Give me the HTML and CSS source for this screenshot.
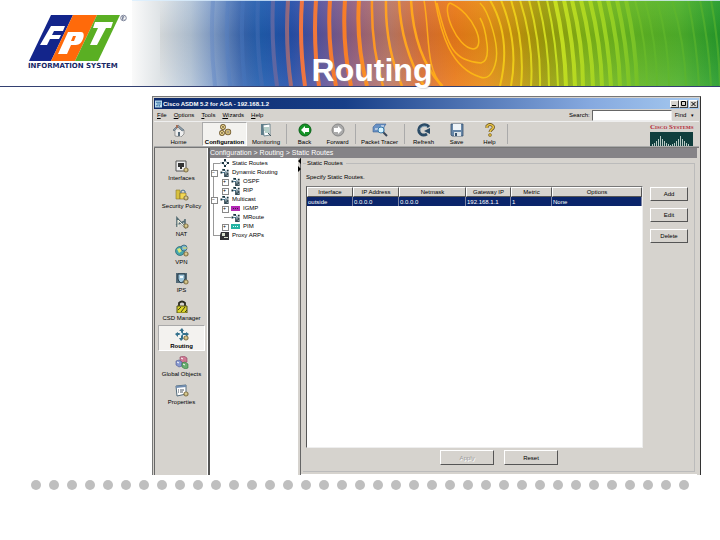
FILE: index.html
```
<!DOCTYPE html>
<html lang="en">
<head>
<meta charset="utf-8">
<title>Routing</title>
<link rel="stylesheet" href="styles.css">
</head>
<body>
<svg class="defs" aria-hidden="true">
  <symbol id="gear" viewBox="0 0 6 6"><circle cx="3" cy="3" r="2" fill="#f0e2a0" stroke="#85754a" stroke-width="1.2"/><circle cx="3" cy="3" r=".6" fill="#75683d"/></symbol>
  <symbol id="nodes" viewBox="0 0 10 8"><path d="M0 4h2M5 2l3 2-3 3-2-3z" stroke="#456274" fill="none" stroke-width=".7"/><path d="M4 0h2v2H4zM2 3h2v2H2zM7 3h2v2H7zM4 6h2v2H4z" fill="#18323e"/></symbol>
  <symbol id="routes" viewBox="0 0 10 10"><path d="M3 1l4 4M2 5h3" stroke="#397599"/><path d="M2 1h3v2H2zM0 4h2v2H0zM7 2h2v2H7z" fill="#17333e"/><path d="M4 5h5v5H4z" fill="#384d57"/><path d="M5 6h2v1H5zM7 8h1v1H7z" fill="#c8e4ee"/></symbol>
</svg>
<main class="slide">
  <header class="banner">
    <div class="brand">
      <svg class="logo" viewBox="0 0 100 48" role="img" aria-label="FPT">
        <path d="M23 2h22L23 48H1z" fill="#13258b"/><path d="M45 2h24L47 48H23z" fill="#ff6a0a"/><path d="M69 2h23L70 48H47z" fill="#5aaf23"/>
        <path d="M23 13h14l-2 5h-9l-2 4h9l-2 4h-9l-3 6h-7z M40 19h13c4 0 3 6 1 9-2 4-5 4-9 4h-2l-4 9h-9z M67 9h18l-2 6h-5L69 32h-7l8-17h-5z" fill="#fff"/><path d="M45 23h3l-2 5h-3z" fill="#ff6a0a"/>
        <circle cx="95.500" cy="5" r="2.800" fill="none" stroke="#4b5573" stroke-width=".7"/><path d="M94.500 7V3.500h1.500q1 1-1.500 1.500l2 2" fill="none" stroke="#4b5573" stroke-width=".6"/>
      </svg>
      <p class="brand-name">INFORMATION SYSTEM</p>
    </div>
    <svg class="waves" viewBox="132 0 588 86" preserveAspectRatio="none" aria-hidden="true">
      <defs>
        <linearGradient id="base" gradientUnits="userSpaceOnUse" x1="132" y1="0" x2="720" y2="0">
          <stop offset="0" stop-color="#fafafa"/><stop offset=".05" stop-color="#dde2e5"/><stop offset=".1" stop-color="#b4c5d8"/><stop offset=".14" stop-color="#7f9dca"/><stop offset=".185" stop-color="#3c68b0"/><stop offset=".22" stop-color="#205daf"/><stop offset=".27" stop-color="#2450ab"/><stop offset=".32" stop-color="#5a559f"/><stop offset=".38" stop-color="#98627e"/><stop offset=".44" stop-color="#bd7965"/><stop offset=".49" stop-color="#db7135"/><stop offset=".55" stop-color="#eb7b19"/><stop offset=".6" stop-color="#e78c15"/><stop offset=".65" stop-color="#c9960d"/><stop offset=".7" stop-color="#9f9d0a"/><stop offset=".77" stop-color="#80b516"/><stop offset=".85" stop-color="#62b622"/><stop offset=".93" stop-color="#50b22b"/><stop offset="1" stop-color="#259b2c"/>
        </linearGradient>
        <linearGradient id="ridge" gradientUnits="userSpaceOnUse" x1="200" y1="0" x2="720" y2="0">
          <stop offset="0" stop-color="#6c8dc8"/><stop offset=".1" stop-color="#3f72bc"/><stop offset=".15" stop-color="#72679b"/><stop offset=".19" stop-color="#ee7443"/><stop offset=".28" stop-color="#f77d28"/><stop offset=".36" stop-color="#ffa222"/><stop offset=".5" stop-color="#ffae14"/><stop offset=".6" stop-color="#eecb18"/><stop offset=".68" stop-color="#c9de20"/><stop offset=".78" stop-color="#9bd222"/><stop offset=".87" stop-color="#64b92a"/><stop offset="1" stop-color="#55b22d"/>
        </linearGradient>
        <linearGradient id="shade" x2="0" y2="1"><stop stop-color="#fff" stop-opacity=".05"/><stop offset=".4" stop-color="#000" stop-opacity=".06"/><stop offset="1" stop-color="#fff" stop-opacity=".08"/></linearGradient>
      </defs>
      <path fill="url(#base)" d="M132 0h588v86H132z"/><path fill="url(#shade)" d="M160 0h560v86H160z"/>
      <g fill="none" stroke="url(#ridge)">
        <path stroke-width="4" opacity=".45" d="M213 0q-3 43 2 86M228 0q-3 43 2 86M243 0q-3 43 2 86M258 0q-2 43 4 86"/>
        <path stroke-width="4" opacity=".8" d="M273 0q-2 43 4 86M288 0q-3 43 3 86"/>
        <path stroke-width="4" d="M302 0q-3 43 3 86M316 0q-3 43 3 86M330 0q-3 43 6 86M345 0q-3 43 6 86M359 0q-3 43 8 86"/>
        <path stroke-width="2.500" d="M372 0q-1 46 11 86M386 0q-1 46 16 86M399 0q2 48 25 86M411 0q3 56 31 86"/>
        <path stroke-width="1.500" d="M424 0C430 34 425 70 443 86M435 0C441 34 451 68 480 77Q490 81 495 65C501 47 488 10 480 3M450 3C441 8 457 48 473 49C487 48 474 13 450 3M437 3C448 50 454 60 481 63Q489 61 487 44Q485 26 480 18"/>
        <path stroke-width="2" d="M490 0Q512 38 500 86M501 0Q519 44 511 86M511 0Q525 44 521 86M520 0Q534 44 531 86M529 0q12 44 11 86M538 0q11 44 11 86M547 0q10 44 11 86"/>
        <path stroke-width="4" d="M555 0q10 44 11 86M564 0q10 44 11 86M572 0q11 44 11 86M581 0q11 44 12 86M590 0q11 44 12 86M599 0q10 44 12 86M608 0q11 44 12 86M617 0q10 44 12 86M626 0q10 44 11 86"/>
        <path stroke-width="2" opacity=".65" d="M635 0q12 44 12 86M645 0q12 44 12 86M657 0q12 44 12 86M672 0q13 44 14 86M688 0q9 44 11 86M700 0q9 44 11 86M711 0q8 44 9 86"/>
      </g>
      <path fill="#d9efff" fill-opacity=".8" d="M132 0h588v1H132z"/>
    </svg>
    <h1 class="title">Routing</h1>
  </header>

  <section class="window" aria-label="Cisco ASDM">
    <div class="titlebar">
      <svg class="app-icon" viewBox="0 0 8 8"><path fill="#bfe0f0" d="M0 0h8v8H0z"/><path d="M1 2h6M2 4h5M1 6h3M5 5v2" stroke="#276299"/></svg>
      <span class="caption">Cisco ASDM 5.2 for ASA - 192.168.1.2</span>
      <button class="win-btn" aria-label="Minimize"><svg viewBox="0 0 7 6"><path d="M1 4.500h4" stroke="#000"/></svg></button>
      <button class="win-btn" aria-label="Maximize"><svg viewBox="0 0 7 6"><path d="M1.500 .5h4v4h-4z" fill="none" stroke="#000"/></svg></button>
      <button class="win-btn close" aria-label="Close"><svg viewBox="0 0 7 6"><path d="M1.500 1l4 4M5.500 1l-4 4" stroke="#000"/></svg></button>
    </div>
    <nav class="menubar">
      <button><u>F</u>ile</button><button><u>O</u>ptions</button><button><u>T</u>ools</button><button><u>W</u>izards</button><button><u>H</u>elp</button>
      <label class="search" for="search">Search:</label><input id="search" type="text">
      <button class="find">Find <span class="caret">▾</span></button>
    </nav>
    <div class="toolbar">
      <button class="tool home"><svg viewBox="0 0 14 14"><path d="M3 7v6l6 1 3-3V7" fill="#eee" stroke="#777" stroke-width=".7"/><path d="M1 7l5-5 6 5-2 1-4-4-4 4z" fill="#8d9da9" stroke="#50606b" stroke-width=".6"/><path d="M6 9h2v4H6z" fill="#566a79"/><path d="M4 2h2v3H4z" fill="#a46f58"/></svg>Home</button>
      <button class="tool wide active"><svg viewBox="0 0 14 14"><g fill="none" stroke="#786032" stroke-width="2.400"><circle cx="5" cy="3" r="1.700"/><circle cx="10" cy="8" r="2"/><circle cx="4" cy="9" r="1.700"/></g><g fill="none" stroke="#e9d58c"><circle cx="5" cy="3" r="1.600"/><circle cx="10" cy="8" r="1.900"/><circle cx="4" cy="9" r="1.600"/></g></svg>Configuration</button>
      <button class="tool mid"><svg viewBox="0 0 14 14"><path d="M2 1h6v11H2z" fill="#5f7f8c"/><path d="M4 2l7-1v11l-6 1z" fill="#fff" stroke="#567380" stroke-width=".8"/><path d="M5 5h5M5 7h5M6 9h4" stroke="#6d9f92"/><path d="M9 10l3 3" stroke="#44565e"/></svg>Monitoring</button>
      <span class="sep"></span>
      <button class="tool"><svg viewBox="0 0 14 14"><circle cx="7" cy="7" r="6" fill="#149326" stroke="#096218"/><path d="M3 7l4-4v2h4v4H7v2z" fill="#fff"/></svg>Back</button>
      <button class="tool"><svg viewBox="0 0 14 14"><circle cx="7" cy="7" r="6" fill="#aaa" stroke="#878787"/><path d="M11 7L7 3v2H3v4h4v2z" fill="#fff"/></svg>Forward</button>
      <span class="sep"></span>
      <button class="tool wide"><svg class="broad" viewBox="0 0 16 14"><path d="M1 4l3-3h10l-2 3v5H1z" fill="#6991c4" stroke="#3e6396" stroke-width=".6"/><path d="M3 6h5M9 3h3" stroke="#fff"/><path d="M11 9l4 4" stroke="#39475a" stroke-width="2"/><circle cx="9" cy="7" r="3" fill="#d8f4ff" stroke="#397bab"/></svg>Packet Tracer</button>
      <span class="sep apart"></span>
      <button class="tool"><svg viewBox="0 0 14 14"><path d="M10 11C5 14 1 10 2 6c1-4 7-6 10-2" fill="none" stroke="#2b4b66" stroke-width="3"/><path d="M13 5v6L7 8z" fill="#2b4b66"/><path d="M3 7c0-3 4-5 7-3" fill="none" stroke="#8fb0c5"/></svg>Refresh</button>
      <button class="tool"><svg viewBox="0 0 14 14"><path d="M1 1h12v12H2l-1-1z" fill="#6787a8" stroke="#38526e" stroke-width=".8"/><path d="M3 1h8v6H3z" fill="#eef3f7"/><path d="M4 9h7v4H4z" fill="#dce3e8"/><path d="M5 10h2v3H5z" fill="#38526e"/></svg>Save</button>
      <button class="tool"><svg viewBox="0 0 14 14"><path d="M4 5V3q3-3 6 0c2 3-3 3-3 6" fill="none" stroke="#6c5726" stroke-width="3"/><path d="M4 5V3q3-3 6 0c2 3-3 3-3 6" fill="none" stroke="#e9c548" stroke-width="1.500"/><circle cx="7" cy="12" r="1.500" fill="#e0b938" stroke="#6c5726" stroke-width=".6"/></svg>Help</button>
      <span class="sep"></span>
      <div class="cisco">
        <span class="cisco-name">C<small>ISCO</small> S<small>YSTEMS</small></span>
        <svg viewBox="0 0 43 14" aria-hidden="true"><path fill="#103e3d" d="M0 0h43v14H0z"/><path d="M2.500 14v-2M4.500 14v-3M6.500 14v-5M8.500 14V7M10.500 14V4M12.500 14V7M14.500 14V9M16.500 14v-3M18.500 14v-2M20.500 14v-1M22.500 14v-2M24.500 14v-3M26.500 14V9M28.500 14V7M30.500 14V4M32.500 14V7M34.500 14V9M36.500 14v-3M38.500 14v-2" stroke="#b8cbc6"/></svg>
      </div>
    </div>

    <div class="workspace">
      <nav class="sidebar">
        <button class="side"><svg viewBox="0 0 14 13"><path d="M1 1h10v10H1z" fill="#eee" stroke="#555"/><path d="M3 3h6v4H7v2H5V7H3z" fill="#333"/><use href="#gear" x="8" y="7" width="6" height="6"/></svg>Interfaces</button>
        <button class="side"><svg viewBox="0 0 14 13"><path d="M1 2h4v9H1z" fill="#d8c13f" stroke="#87772c" stroke-width=".6"/><path d="M5 5h6v6H5z" fill="#f1d753" stroke="#785f23" stroke-width=".6"/><path d="M6 5V3q2-2 4 0v2" fill="none" stroke="#476e8f"/><use href="#gear" x="8" y="7" width="6" height="6"/></svg>Security Policy</button>
        <button class="side"><svg viewBox="0 0 14 13"><path d="M2 11V2l8 9V3M1 9l9-4" fill="none" stroke="#536b72" stroke-width="1.600"/><path d="M3 11V4l6 6" fill="none" stroke="#f2f2df"/><use href="#gear" x="8" y="7" width="6" height="6"/></svg>NAT</button>
        <button class="side"><svg viewBox="0 0 14 13"><circle cx="5" cy="7" r="4.500" fill="#46a4ad" stroke="#28646f" stroke-width=".7"/><path d="M2 5l3-1 2 3-3 2z" fill="#d8e979"/><circle cx="9" cy="4" r="3" fill="#78b8cc" stroke="#28546f" stroke-width=".7"/><path d="M8 4h4" stroke="#f5df5c"/><use href="#gear" x="8" y="7" width="6" height="6"/></svg>VPN</button>
        <button class="side"><svg viewBox="0 0 14 13"><path d="M1 1h11v10H1z" fill="#526977"/><path d="M3 2h7v5q-1 3-4 4-3-2-3-4z" fill="#9fc7dc" stroke="#243b49"/><path d="M5 4h3v2H5z" fill="#effaff"/><use href="#gear" x="8" y="7" width="6" height="6"/></svg>IPS</button>
        <button class="side"><svg viewBox="0 0 14 13"><path d="M4 6V3q3-3 6 0v3" fill="none" stroke="#2a2a20" stroke-width="1.800"/><path d="M2 6h10v7H2z" fill="#d9d329" stroke="#55521b"/><path d="M3 10l3-3M6 12l4-5M10 12l2-2" stroke="#403f18"/></svg>CSD Manager</button>
        <button class="side active"><svg viewBox="0 0 14 13"><path d="M7 0l2 3H8v2h3V4l3 2-3 3V7H8v3h1l-3 3-2-3h2V7H3v2L0 6l3-2v1h3V3H4z" fill="#34718c"/><circle cx="6" cy="6" r="1.500" fill="#d4edf5"/><use href="#gear" x="8" y="7" width="6" height="6"/></svg>Routing</button>
        <button class="side"><svg viewBox="0 0 14 13"><path d="M5 1l4-1 3 2v4L8 7 5 5z" fill="#ce7893" stroke="#8c4360" stroke-width=".6"/><path d="M1 5l3-1 3 2v4l-3 1-3-2z" fill="#8798ce" stroke="#4d5590" stroke-width=".6"/><path d="M7 7l3-1 3 2v4l-3 1-3-2z" fill="#69ae70" stroke="#307c40" stroke-width=".6"/><path d="M6 2l2 1M2 6l2 1M8 8l2 1" stroke="#fff"/></svg>Global Objects</button>
        <button class="side"><svg viewBox="0 0 14 13"><path d="M1 2l10-1v9L2 12z" fill="#fff" stroke="#526a7b"/><path d="M1 2l10-1v2L1 4z" fill="#718db0"/><path d="M3 6h1M5 6h4M3 8h1M5 8h3" stroke="#4b5560"/><use href="#gear" x="8" y="7" width="6" height="6"/></svg>Properties</button>
      </nav>
      <div class="pane">
        <h2 class="crumb">Configuration &gt; Routing &gt; Static Routes</h2>
        <div class="split">
          <ul class="tree">
            <li><svg><use href="#nodes" width="10" height="8"/></svg>Static Routes</li>
            <li class="open"><svg><use href="#routes" width="10" height="9"/></svg>Dynamic Routing
              <ul>
                <li class="shut"><svg><use href="#routes" width="10" height="9"/></svg>OSPF</li>
                <li class="shut"><svg><use href="#routes" width="10" height="9"/></svg>RIP</li>
              </ul>
            </li>
            <li class="open"><svg><use href="#routes" width="10" height="9"/></svg>Multicast
              <ul>
                <li class="shut"><svg viewBox="0 0 10 9"><path fill="#b427b5" d="M0 2h9v5H0z"/><path stroke="#401c49" d="M2 4.500h1M4 4.500h1M6 4.500h1"/></svg>IGMP</li>
                <li><svg><use href="#routes" width="10" height="9"/></svg>MRoute</li>
                <li class="shut"><svg viewBox="0 0 10 9"><path fill="#23b3a4" d="M0 2h9v5H0z"/><path stroke="#d9fff8" d="M2 4.500h1M4 4.500h1M6 4.500h1"/></svg>PIM</li>
              </ul>
            </li>
            <li><svg viewBox="0 0 10 9"><path fill="#333" d="M1 1h8v8H0V4z"/><path fill="#d8e0cb" d="M2 2h3v3H2zM4 6h4v1H4z"/></svg>Proxy ARPs</li>
          </ul>
          <div class="divider"><svg viewBox="0 0 3 14"><path d="M3 0v6L0 3zM0 8l3 3-3 3z"/></svg></div>
          <div class="panel">
            <fieldset>
              <legend>Static Routes</legend>
              <p class="hint">Specify Static Routes.</p>
              <div class="editor">
                <div class="grid">
                  <table>
                    <colgroup><col class="c-if"><col class="c-ip"><col class="c-mask"><col class="c-gw"><col class="c-metric"><col></colgroup>
                    <thead><tr><th>Interface</th><th>IP Address</th><th>Netmask</th><th>Gateway IP</th><th>Metric</th><th>Options</th></tr></thead>
                    <tbody><tr><td>outside</td><td>0.0.0.0</td><td>0.0.0.0</td><td>192.168.1.1</td><td>1</td><td>None</td></tr></tbody>
                  </table>
                </div>
                <div class="actions"><button class="btn">Add</button><button class="btn">Edit</button><button class="btn">Delete</button></div>
              </div>
              <div class="footer"><button class="btn large" disabled>Apply</button><button class="btn large">Reset</button></div>
            </fieldset>
          </div>
        </div>
      </div>
    </div>
  </section>

  <div class="dots" aria-hidden="true"><i></i><i></i><i></i><i></i><i></i><i></i><i></i><i></i><i></i><i></i><i></i><i></i><i></i><i></i><i></i><i></i><i></i><i></i><i></i><i></i><i></i><i></i><i></i><i></i><i></i><i></i><i></i><i></i><i></i><i></i><i></i><i></i><i></i><i></i><i></i><i></i><i></i></div>
</main>
</body>
</html>
```
FILE: styles.css
```
* { box-sizing: border-box; }
body { margin: 0; background: #fff; font: 6px/8px "Liberation Sans", Arial, sans-serif; color: #000; }
button { font: inherit; color: inherit; background: none; border: 0; padding: 0; white-space: nowrap; }
svg { display: block; flex: none; }
ul, p, h1, h2 { margin: 0; padding: 0; list-style: none; }
.defs { position: absolute; width: 0; height: 0; }
.slide { min-height: 100vh; }

.banner { position: relative; display: flex; height: 87px; border-bottom: 1px solid #334071; }
.brand { width: 132px; padding: 13px 0 0 28px; }
.logo { width: 100px; height: 48px; }
.brand-name { margin-top: 1px; font: bold 7px/8px "DejaVu Sans", sans-serif; color: #182867; white-space: nowrap; }
.waves { flex: 1; min-width: 0; height: 86px; }
.title { position: absolute; inset: 51px 0 auto 24px; text-align: center; color: #fff; font-size: 32px; line-height: 38px; text-shadow: 1px 1px 1px #9696a055; }

.window { margin: 9px 19px 0 152px; padding: 1px 1px 0; background: #d6d3ce; border: 1px solid #777; border-right: 1px solid #333; border-bottom: 0; }
.titlebar { display: flex; align-items: center; height: 11px; padding: 0 1px; background: linear-gradient(90deg, #0b2869 0%, #183f88 35%, #86a9df 80%, #a6caf0); color: #fff; font-weight: bold; }
.app-icon { width: 7px; height: 8px; }
.caption { flex: 1; padding-left: 1px; }
.win-btn { width: 9px; height: 8px; background: #d6d3ce; border: 1px solid; border-color: #fff #444 #444 #fff; }
.win-btn svg { width: 7px; height: 6px; }
.close { margin-left: 1px; }
.menubar { display: flex; align-items: center; height: 12px; padding: 0 5px 0 3px; gap: 7px; }
.search { margin-left: auto; }
.menubar input { width: 80px; height: 11px; margin-left: -5px; padding: 0 2px; font: inherit; background: #fff; border: 1px solid; border-color: #666 #eee #eee #666; border-radius: 0; }
.find { margin-left: -4px; }
.caret { margin-left: 3px; font-size: 5px; }
.toolbar { display: flex; align-items: center; height: 26px; padding-left: 8px; border-top: 1px solid #eee; border-bottom: 1px solid #aaa; }
.tool { display: flex; flex-direction: column; align-items: center; justify-content: space-between; width: 33px; height: 24px; padding-top: 1px; }
.tool svg { width: 14px; height: 14px; }
.tool svg.broad { width: 16px; }
.home { margin-right: 7px; }
.wide { width: 45px; }
.mid { width: 38px; }
.tool.active, .side.active { background: #f3f2ef; font-weight: bold; border: 1px solid #aaa; border-color: #aaa #fff #fff #aaa; }
.sep { width: 1px; height: 20px; margin: 0 1px; background: #aaa; }
.apart { margin: 0 2px; }
.cisco { width: 43px; margin-left: auto; margin-right: 6px; }
.cisco svg { width: 43px; height: 14px; }
.cisco-name { display: block; font: bold 7px/8px "Liberation Serif", serif; color: #b42635; white-space: nowrap; }
.cisco-name small { font-size: 5px; }

.workspace { display: flex; min-height: 328px; border-top: 1px solid #777; }
.sidebar { flex: none; display: flex; flex-direction: column; gap: 2px; width: 54px; padding: 9px 2px 0 3px; border-left: 1px solid #666; border-right: 1px solid #fff; }
.side { display: flex; flex-direction: column; align-items: center; justify-content: space-between; height: 26px; padding: 3px 0 1px; }
.side.active { padding: 2px 0 0; }
.side svg { width: 14px; height: 13px; }
.pane { flex: 1; min-width: 0; display: flex; flex-direction: column; border-left: 2px solid #555; padding-right: 2px; }
.crumb { height: 10px; background: #858387; color: #fff; font-size: 7px; line-height: 10px; font-weight: normal; white-space: nowrap; }
.split { flex: 1; display: flex; }
.tree { flex: none; width: 88px; padding: 1px 0 0 13px; background: #fff; }
.tree li { position: relative; line-height: 9px; padding-left: 9px; white-space: nowrap; }
.tree svg { position: absolute; left: -3px; top: 0; width: 10px; height: 9px; }
.tree ul { margin-left: 2px; }
.tree li::before { content: ""; position: absolute; left: -10px; top: 4px; width: 7px; height: 1px; background: #999; }
.tree > li::after { content: ""; position: absolute; left: -10px; top: 4px; bottom: -5px; width: 1px; background: #999; }
.tree > li:last-child::after { display: none; }
.tree li.open::before, .tree li.shut::before { content: "+"; z-index: 1; left: -12px; top: 2px; width: 5px; height: 5px; border: 1px solid #888; background: #fff; font-size: 5px; line-height: 3px; }
.tree li.open::before { content: "−"; }
.divider { width: 3px; background: #d6d3ce; border-right: 1px solid #666; }
.divider svg { width: 3px; height: 14px; }
.panel { flex: 1; min-width: 0; display: flex; padding: 1px 2px 2px; border-bottom: 1px solid #fff; }
fieldset { flex: 1; min-width: 0; display: flex; flex-direction: column; margin: 0; padding: 6px 6px 6px 3px; border: 1px solid #bbb; border-left: 0; }
legend { padding: 0 3px 0 1px; }
.hint { line-height: 8px; }
.editor { flex: 1; display: flex; gap: 7px; margin-top: 5px; }
.grid { flex: 1; min-width: 0; background: #fff; border: 1px solid; border-color: #777 #eee #eee #555; }
table { width: 100%; table-layout: fixed; border-collapse: separate; border-spacing: 0; }
.c-if, .c-ip { width: 46px; }
.c-mask { width: 67px; }
.c-gw { width: 45px; }
.c-metric { width: 41px; }
th { height: 10px; padding: 0; font-weight: normal; background: #d6d3ce; border: 1px solid; border-color: #fff #555 #555 #fff; }
td { height: 9px; padding: 0 1px; background: #0a246a; color: #fff; border-right: 1px solid #7b83a2; }
th, td { line-height: 8px; white-space: nowrap; }
.actions { display: flex; flex-direction: column; gap: 7px; padding-top: 1px; }
.btn { width: 38px; height: 14px; background: #d6d3ce; border: 1px solid; border-color: #fff #555 #555 #fff; }
.btn.large { width: 54px; height: 15px; }
.btn:disabled { color: #999; text-shadow: 1px 1px #fff; }
.footer { display: flex; justify-content: center; gap: 10px; padding: 2px 0 0 4px; }

.dots { display: flex; justify-content: space-between; margin: 5px 31px 0; }
.dots i { width: 10px; height: 10px; border-radius: 50%; background: #bfbfbf; }
```
